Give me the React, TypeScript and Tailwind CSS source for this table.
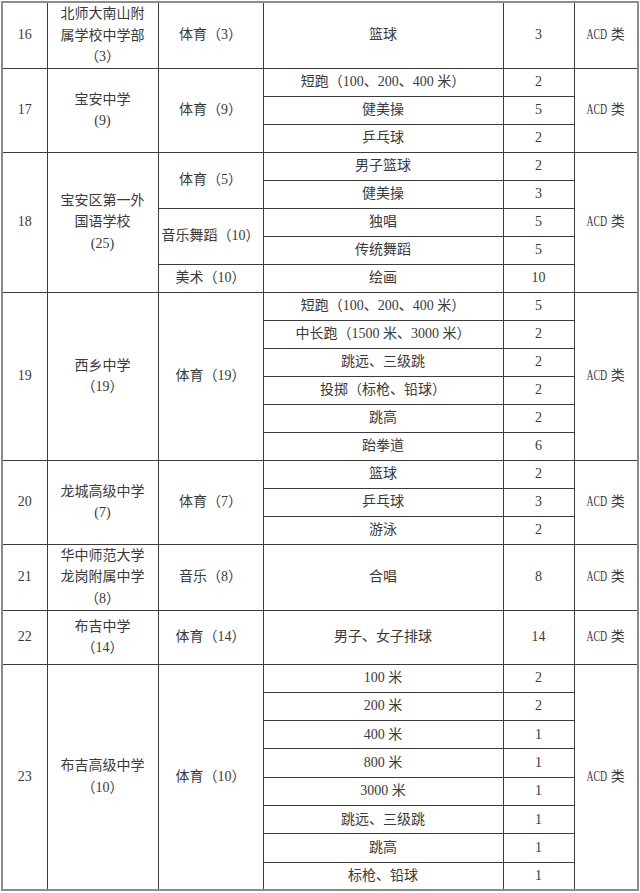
import React from 'react';

type Cat = { name: string; items: [string, string][] };
type School = { no: string; name: string[]; cats: Cat[]; h?: number };

const schools: School[] = [
  {
    no: '16',
    name: ['北师大南山附', '属学校中学部', '（3）'],
    cats: [{ name: '体育（3）', items: [['篮球', '3']] }],
    h: 66,
  },
  {
    no: '17',
    name: ['宝安中学', '(9)'],
    cats: [
      {
        name: '体育（9）',
        items: [
          ['短跑（100、200、400 米）', '2'],
          ['健美操', '5'],
          ['乒乓球', '2'],
        ],
      },
    ],
  },
  {
    no: '18',
    name: ['宝安区第一外', '国语学校', '(25)'],
    cats: [
      { name: '体育（5）', items: [['男子篮球', '2'], ['健美操', '3']] },
      { name: '音乐舞蹈（10）', items: [['独唱', '5'], ['传统舞蹈', '5']] },
      { name: '美术（10）', items: [['绘画', '10']] },
    ],
  },
  {
    no: '19',
    name: ['西乡中学', '（19）'],
    cats: [
      {
        name: '体育（19）',
        items: [
          ['短跑（100、200、400 米）', '5'],
          ['中长跑（1500 米、3000 米）', '2'],
          ['跳远、三级跳', '2'],
          ['投掷（标枪、铅球）', '2'],
          ['跳高', '2'],
          ['跆拳道', '6'],
        ],
      },
    ],
  },
  {
    no: '20',
    name: ['龙城高级中学', '(7)'],
    cats: [
      {
        name: '体育（7）',
        items: [
          ['篮球', '2'],
          ['乒乓球', '3'],
          ['游泳', '2'],
        ],
      },
    ],
  },
  {
    no: '21',
    name: ['华中师范大学', '龙岗附属中学', '（8）'],
    cats: [{ name: '音乐（8）', items: [['合唱', '8']] }],
    h: 66,
  },
  {
    no: '22',
    name: ['布吉中学', '（14）'],
    cats: [{ name: '体育（14）', items: [['男子、女子排球', '14']] }],
    h: 54,
  },
  {
    no: '23',
    name: ['布吉高级中学', '（10）'],
    cats: [
      {
        name: '体育（10）',
        items: [
          ['100 米', '2'],
          ['200 米', '2'],
          ['400 米', '1'],
          ['800 米', '1'],
          ['3000 米', '1'],
          ['跳远、三级跳', '1'],
          ['跳高', '1'],
          ['标枪、铅球', '1'],
        ],
      },
    ],
    h: 28.3,
  },
];

const cell = 'border border-[#3c3c3c] text-center align-middle p-0';

// the "ACD" in the scan is a condensed face, so squeeze it
function Acd() {
  return (
    <>
      <span className="inline-block scale-x-70 -mx-[4.5px]">ACD</span> 类
    </>
  );
}

export default function App() {
  const rows: React.ReactNode[] = [];

  schools.forEach((s) => {
    const total = s.cats.reduce((n, c) => n + c.items.length, 0);
    const h = s.h ?? 28;
    let first = true;
    s.cats.forEach((c) => {
      c.items.forEach(([item, count], i) => {
        rows.push(
          <tr key={`${s.no}-${c.name}-${i}`} style={{ height: h }}>
            {first && (
              <td rowSpan={total} className={cell}>
                {s.no}
              </td>
            )}
            {first && (
              <td rowSpan={total} className={`${cell} leading-[21.5px]`}>
                {s.name.map((l) => (
                  <div key={l}>{l}</div>
                ))}
              </td>
            )}
            {i === 0 && (
              <td rowSpan={c.items.length} className={cell}>
                {c.name}
              </td>
            )}
            <td className={cell}>{item}</td>
            <td className={cell}>{count}</td>
            {first && (
              <td rowSpan={total} className={cell}>
                <Acd />
              </td>
            )}
          </tr>
        );
        first = false;
      });
    });
  });

  return (
    <div className="w-[640px] h-[893px] bg-white pl-px pt-px overflow-hidden">
      <table
        className="table-fixed border-collapse border-2 border-[#8c8c8c] w-[638px] text-[14px] text-[#3a3a3a] leading-none"
        style={{ fontFamily: '"Liberation Serif", "Noto Sans CJK SC", serif' }}
      >
        <colgroup>
          <col className="w-[45px]" />
          <col className="w-[111px]" />
          <col className="w-[105px]" />
          <col className="w-[240px]" />
          <col className="w-[71px]" />
          <col className="w-[64px]" />
        </colgroup>
        <tbody>{rows}</tbody>
      </table>
    </div>
  );
}
